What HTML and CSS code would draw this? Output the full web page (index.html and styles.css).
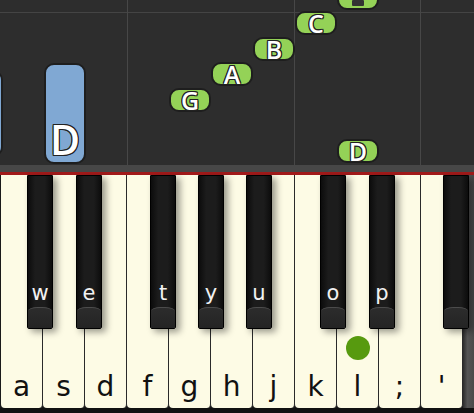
FILE: index.html
```html
<!DOCTYPE html>
<html lang="en">
<head>
    <meta charset="UTF-8">
    <meta name="viewport" content="width=device-width, initial-scale=1.0">
    <title>Piano</title>
    <link rel="stylesheet" href="styles.css">
</head>
<body>
    <div class="roll">
        <div class="grid-h"></div>
        <div class="grid-v" style="left: 127px;"></div>
        <div class="grid-v" style="left: 294px;"></div>
        <div class="grid-v" style="left: 420px;"></div>

        <!-- notes falling on the roll -->
        <div class="note blue edge" style="left: -40px; top: 70px; height: 87px;"></div>
        <div class="note blue" style="left: 44px; top: 63px; height: 101px;">D</div>
        <div class="note green" style="left: 169px; top: 88px;">G</div>
        <div class="note green" style="left: 211px; top: 62px;">A</div>
        <div class="note green" style="left: 253px; top: 37px;">B</div>
        <div class="note green" style="left: 295px; top: 11px;">C</div>
        <div class="note green" style="left: 337px; top: -14px;"><i class="stub"></i></div>
        <div class="note green" style="left: 337px; top: 139px;">D</div>
    </div>
    <div class="rail"></div>

    <div class="piano">
        <div class="whites">
            <div class="white"><span>a</span></div>
            <div class="white"><span>s</span></div>
            <div class="white"><span>d</span></div>
            <div class="white"><span>f</span></div>
            <div class="white"><span>g</span></div>
            <div class="white"><span>h</span></div>
            <div class="white"><span>j</span></div>
            <div class="white"><span>k</span></div>
            <div class="white"><div class="dot"></div><span>l</span></div>
            <div class="white"><span>;</span></div>
            <div class="white"><span>'</span></div>
        </div>
        <div class="side"></div>

        <div class="black" style="left: 27px;"><span>w</span><div class="cap"></div></div>
        <div class="black" style="left: 76px;"><span>e</span><div class="cap"></div></div>
        <div class="black" style="left: 150px;"><span>t</span><div class="cap"></div></div>
        <div class="black" style="left: 198px;"><span>y</span><div class="cap"></div></div>
        <div class="black" style="left: 246px;"><span>u</span><div class="cap"></div></div>
        <div class="black" style="left: 320px;"><span>o</span><div class="cap"></div></div>
        <div class="black" style="left: 369px;"><span>p</span><div class="cap"></div></div>
        <div class="black" style="left: 443px;"><span></span><div class="cap"></div></div>
    </div>
    <div class="floor"></div>
</body>
</html>
```

FILE: styles.css
```css
body {
    margin: 0;
    width: 474px;
    height: 413px;
    overflow: hidden;
    background: #111;
    font-family: 'DejaVu Sans', 'Open Sans', sans-serif;
}

/* 上方卷帘 */
.roll {
    position: relative;
    height: 165px;
    background: #2d2d2d;
    border-bottom: 7px solid #474747;
    overflow: hidden;
}

.grid-h {
    position: absolute;
    left: 0;
    right: 0;
    top: 12px;
    height: 1px;
    background: #444;
}

.grid-v {
    position: absolute;
    top: 0;
    bottom: 0;
    width: 1px;
    background: #474747;
}

.note {
    position: absolute;
    box-sizing: border-box;
    width: 42px;
    height: 24px;
    border: 2px solid #1e1e1e;
    border-radius: 10px;
    display: flex;
    align-items: center;
    justify-content: center;
    color: #fff;
    font-family: 'Open Sans', 'DejaVu Sans', sans-serif;
    font-weight: 600;
    font-size: 25px;
    line-height: 1;
    text-shadow: 1px 0 #222, -1px 0 #222, 0 1px #222, 0 -1px #222,
                 1px 1px #222, -1px -1px #222, 1px -1px #222, -1px 1px #222;
}

.note.green {
    background: #94d257;
}

.note.blue {
    background: #80a8d3;
    align-items: flex-end;
    padding-bottom: 2px;
    font-size: 41px;
}

.note.edge {
    width: 43px;
}

.stub {
    width: 12px;
    height: 6px;
    margin-top: 10px;
    background: #333;
    border-radius: 1px;
}

.rail {
    height: 3px;
    background: #a11a1a;
}

/* 键盘 */
.piano {
    position: relative;
    display: flex;
    height: 233px;
    padding-left: 1px;
    background: #1a1a1a;
}

.whites {
    display: flex;
}

.white {
    box-sizing: border-box;
    width: 42px;
    border-right: 1px solid #2a2a2a;
    border-radius: 0 0 4px 4px;
    background: #fdfbe5;
    display: flex;
    flex-direction: column;
    align-items: center;
    justify-content: flex-end;
    padding-bottom: 5px;
}

.white span {
    font-size: 28px;
    line-height: 1.1;
    color: #111;
}

.dot {
    width: 24px;
    height: 24px;
    border-radius: 50%;
    background: #579a0f;
    margin-bottom: 12px;
}

.side {
    flex-grow: 1;
    background: linear-gradient(90deg, #2c2c2c, #555 40%, #4a4a4a);
}

.black {
    position: absolute;
    top: 0;
    box-sizing: border-box;
    width: 26px;
    height: 154px;
    border: 1px solid #000;
    border-radius: 0 0 2px 2px;
    background: linear-gradient(90deg, #0c0c0c, #1c1c1c 30%, #1c1c1c 70%, #0c0c0c);
    box-shadow: 4px 3px 7px rgba(0, 0, 0, 0.4);
    display: flex;
    flex-direction: column;
    align-items: center;
    justify-content: flex-end;
}

.black span {
    color: #f2f2f2;
    font-size: 21px;
    line-height: 1;
    margin-bottom: 3px;
}

.cap {
    width: 100%;
    height: 20px;
    border-top: 1px solid #4c4c4c;
    border-radius: 40% 40% 0 0 / 4px 4px 0 0;
    background: linear-gradient(180deg, #2c2c2c, #242424);
}

.floor {
    height: 5px;
    background: #111;
}
```
